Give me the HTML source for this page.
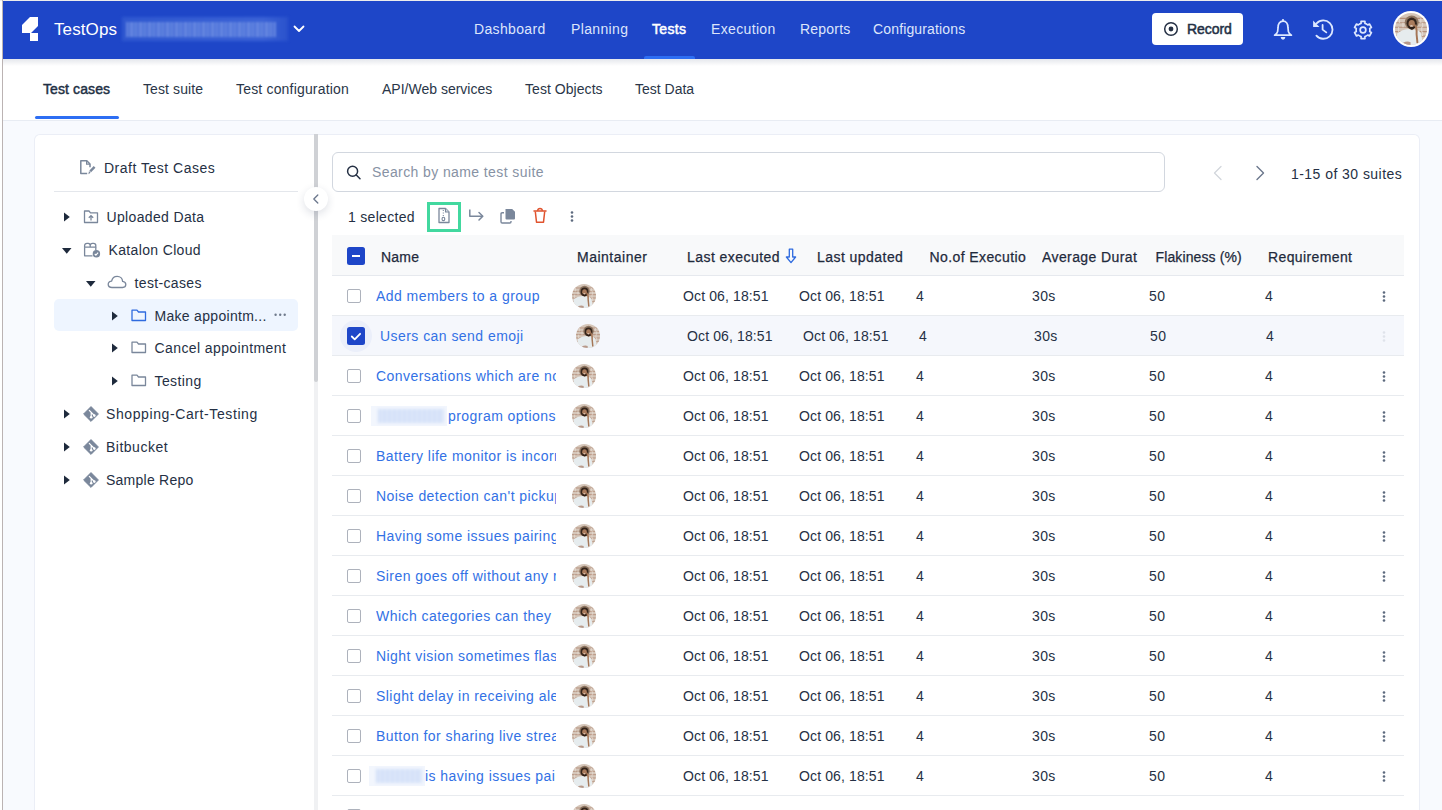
<!DOCTYPE html>
<html><head><meta charset="utf-8">
<style>
*{box-sizing:border-box;margin:0;padding:0}
html,body{width:1442px;height:810px;overflow:hidden;background:#fff;font-family:"Liberation Sans",sans-serif;color:#253044}
.a{position:absolute;white-space:nowrap}
.a svg{display:block}
.t{font-size:14px;line-height:20px;letter-spacing:0.35px}
.nav{color:#dde5fb}
.hd{color:#1f2a3c;-webkit-text-stroke:0.25px #1f2a3c;letter-spacing:0.4px}
.lk{color:#3271e5;letter-spacing:0.45px}
.cb{position:absolute;width:14px;height:14px;border:1.5px solid #adb2bc;border-radius:2px;background:#fff}
.km{position:absolute;width:3px;height:3px;border-radius:50%;background:#5d6a7e}
</style></head><body>
<div class="a" style="left:0;top:0;width:1442px;height:1px;background:#ececec"></div>
<div class="a" style="left:3px;top:1px;width:1439px;height:58px;background:#1e46c8"></div>
<div class="a" style="left:3px;top:59px;width:1439px;height:7px;background:linear-gradient(#e5e7ec,#fff)"></div>
<div class="a" style="left:3px;top:120px;width:1439px;height:690px;background:#f8fafe;border-top:1px solid #e8ecf3"></div>
<div class="a" style="left:35px;top:116px;width:84px;height:3px;background:#2d6ef3;border-radius:2px"></div>
<div class="a" style="left:35px;top:135px;width:1384px;height:720px;background:#fff;border-radius:5px;box-shadow:0 0 0 1px #ebeef6"></div>
<div class="a" style="left:2px;top:0;width:1px;height:810px;background:#bbb3b3"></div>

<svg class="a" style="left:20px;top:15px" width="20" height="28" viewBox="20 15 20 28">
<path d="M22 25 L30 17 L38 17 L38 26 L31 33 L22 33 Z M30 33 L38 33 L38 41 L30 41 Z" fill="#fff"/></svg>
<div class="a " style="left:54px;top:20px;font-size:17px;color:#fff;letter-spacing:0.1px">TestOps</div>
<div class="a" style="left:122px;top:17px;width:166px;height:24px;background:linear-gradient(90deg,#2f58d0,#3b63d6 85%,#2a52cc);filter:blur(1.5px)"></div>
<div class="a" style="left:126px;top:22px;width:150px;height:15px;background:repeating-linear-gradient(90deg,#6687e0 0 2px,#4f74da 2px 4px,#6a8ae2 4px 7px,#557adc 7px 9px);filter:blur(1.3px);opacity:.9"></div>
<svg class="a" style="left:292px;top:23px" width="14" height="12" viewBox="0 0 14 12"><path d="M2.5 3.5 L7 8 L11.5 3.5" stroke="#fff" stroke-width="1.8" fill="none" stroke-linecap="round" stroke-linejoin="round"/></svg>
<div class="a t nav" style="left:474px;top:19px;letter-spacing:0.35px">Dashboard</div>
<div class="a t nav" style="left:571px;top:19px;letter-spacing:0.35px">Planning</div>
<div class="a t nav" style="left:711px;top:19px;letter-spacing:0.35px">Execution</div>
<div class="a t nav" style="left:800px;top:19px;letter-spacing:0.2px">Reports</div>
<div class="a t nav" style="left:873px;top:19px;letter-spacing:0.15px">Configurations</div>
<div class="a t" style="left:652px;top:19px;color:#fff;-webkit-text-stroke:0.5px #fff;letter-spacing:0.3px">Tests</div>
<div class="a" style="left:644px;top:56px;width:51px;height:3px;background:#2d6ef3;border-radius:2px 2px 0 0"></div>
<div class="a" style="left:1152px;top:13px;width:91px;height:32px;background:#fff;border-radius:4px"></div>
<svg class="a" style="left:1163px;top:21px" width="16" height="16" viewBox="0 0 16 16"><circle cx="8" cy="8" r="6.3" stroke="#253044" stroke-width="1.5" fill="none"/><circle cx="8" cy="8" r="2.4" fill="#253044"/></svg>
<div class="a t" style="left:1187px;top:19px;-webkit-text-stroke:0.5px #243045;letter-spacing:-0.05px;color:#243045">Record</div>
<svg class="a" style="left:1271px;top:17px" width="24" height="24" viewBox="0 0 24 24"><path d="M12 4.2 C8.6 4.2 7.1 7.2 7.1 10.2 L6.6 14.6 Q6.2 16.6 3.6 18.2 L20.4 18.2 Q17.8 16.6 17.4 14.6 L16.9 10.2 C16.9 7.2 15.4 4.2 12 4.2Z" stroke="#dde8ff" stroke-width="1.7" fill="none" stroke-linejoin="round"/><circle cx="12" cy="3.1" r="1.1" fill="#dde8ff"/><path d="M9.6 20.1 L14.4 20.1 Q14.1 22.7 12 22.7 Q9.9 22.7 9.6 20.1Z" fill="#dde8ff"/></svg>
<svg class="a" style="left:1311px;top:18px" width="24" height="24" viewBox="0 0 24 24"><path d="M5.6 5.3 A9.2 9.2 0 1 1 5.4 17.6" stroke="#dde8ff" stroke-width="1.8" fill="none" stroke-linecap="round"/><path d="M2.1 2.6 L2.1 9 L8.5 9Z" fill="#dde8ff"/><path d="M11.6 7 L11.6 11.6 L15.3 14.4" stroke="#dde8ff" stroke-width="1.8" fill="none" stroke-linecap="round" stroke-linejoin="round"/></svg>
<svg class="a" style="left:1351px;top:17.5px" width="24" height="24" viewBox="0 0 24 24"><path d="M10.05 5.38 L10.05 3.42 L13.95 3.42 L13.95 5.38 A6.9 6.9 0 0 1 16.76 7.00 L18.46 6.02 L20.41 9.40 L18.71 10.38 A6.9 6.9 0 0 1 18.71 13.62 L20.41 14.60 L18.46 17.98 L16.76 17.00 A6.9 6.9 0 0 1 13.95 18.62 L13.95 20.58 L10.05 20.58 L10.05 18.62 A6.9 6.9 0 0 1 7.24 17.00 L5.54 17.98 L3.59 14.60 L5.29 13.62 A6.9 6.9 0 0 1 5.29 10.38 L3.59 9.40 L5.54 6.02 L7.24 7.00 A6.9 6.9 0 0 1 10.05 5.38 Z" stroke="#dde8ff" stroke-width="1.7" fill="none" stroke-linejoin="round"/><circle cx="12" cy="12" r="2.85" stroke="#dde8ff" stroke-width="1.7" fill="none"/></svg>
<div class="a" style="left:1393px;top:11px;width:36px;height:36px;border-radius:50%;background:#fff"></div>
<div class="a" style="left:1395px;top:13px;width:32px;height:32px"><svg width="32" height="32" viewBox="0 0 36 36"><defs><clipPath id="c1"><circle cx="18" cy="18" r="18"/></clipPath></defs>
<g clip-path="url(#c1)"><rect width="36" height="36" fill="#d5c6b9"/>
<path d="M0 6h36M0 11h36M0 16h36M0 21h36M0 26h36" stroke="#b48f7a" stroke-width="1.3"/>
<path d="M5 6v5M13 6v5M29 6v5M9 11v5M31 11v5M4 16v5M30 16v5M7 21v5M31 21v5" stroke="#e3d8cf" stroke-width="1.4"/>
<ellipse cx="18.8" cy="10.5" rx="7.8" ry="7.8" fill="#8c7460"/>
<ellipse cx="18.8" cy="11.5" rx="5.8" ry="6.4" fill="#33241b"/>
<ellipse cx="18.8" cy="12.3" rx="3.6" ry="4.4" fill="#a97b5c"/>
<path d="M15.2 13.2 Q15.6 18.8 18.8 18.8 Q22 18.8 22.4 13.2 Q20.8 16.2 18.8 15.6 Q16.8 16.2 15.2 13.2Z" fill="#2a1d16"/>
<ellipse cx="18.5" cy="14.5" rx="1.6" ry="0.7" fill="#efe6de"/>
<path d="M1 37 L2.5 23 Q8 18.5 15.5 18 L19 19.5 L22 18.8 Q27.5 18.8 29.5 23.5 L31.5 37Z" fill="#e6ecee"/>
<path d="M22.5 13.8 Q24.8 17 24.3 24 L25.2 33" stroke="#a57656" stroke-width="2.2" fill="none" stroke-linecap="round"/>
<path d="M9 33.5 Q14 31 17.5 33 L17.5 37 L9 37Z" fill="#b8998a"/>
</g></svg></div>
<div class="a t" style="left:43px;top:79px;-webkit-text-stroke:0.45px #223044;letter-spacing:0.1px;color:#223044">Test cases</div>
<div class="a t" style="left:143px;top:79px;color:#2a3648;letter-spacing:0.1px">Test suite</div>
<div class="a t" style="left:236px;top:79px;color:#2a3648;letter-spacing:0.18px">Test configuration</div>
<div class="a t" style="left:382px;top:79px;color:#2a3648;letter-spacing:0.0px">API/Web services</div>
<div class="a t" style="left:525px;top:79px;color:#2a3648;letter-spacing:0.05px">Test Objects</div>
<div class="a t" style="left:635px;top:79px;color:#2a3648;letter-spacing:0.0px">Test Data</div>
<svg class="a" style="left:79px;top:159px" width="18" height="16" viewBox="0 0 18 16"><path d="M8.2 14.6 L1.8 14.6 L1.8 1.8 L7.8 1.8 L11 5 L11 8.2" stroke="#7a879b" stroke-width="1.5" fill="none" stroke-linejoin="round"/><path d="M7.6 1.8 L7.6 5.2 L11 5.2" stroke="#7a879b" stroke-width="1.2" fill="none"/><path d="M11.2 12.3 L15.6 7.9" stroke="#7a879b" stroke-width="2.4" stroke-linecap="butt"/><path d="M9.4 15.2 L10 12.1 L11.6 13.7Z" fill="#7a879b"/></svg>
<div class="a t" style="left:104px;top:158px;letter-spacing:0.5px">Draft Test Cases</div>
<div class="a" style="left:54px;top:191px;width:244px;height:1px;background:#e4e7ec"></div>
<div class="a" style="left:54px;top:299px;width:244px;height:32px;background:#eef5ff;border-radius:5px"></div>
<svg class="a" style="left:64px;top:212px" width="6" height="10" viewBox="0 0 6 10"><path d="M0 0.5 L5.8 5 L0 9.5Z" fill="#1e2a3c"/></svg>
<svg class="a" style="left:83px;top:209px" width="16" height="15" viewBox="0 0 16 15"><path d="M1.5 2 L6 2 L7.5 3.8 L14.5 3.8 L14.5 13.5 L1.5 13.5Z" stroke="#7a879b" stroke-width="1.3" fill="none" stroke-linejoin="round"/><path d="M8 11.5 L8 7 M5.8 8.8 L8 6.6 L10.2 8.8" stroke="#7a879b" stroke-width="1.3" fill="none"/></svg>
<div class="a t" style="left:106.5px;top:207px;">Uploaded Data</div>
<svg class="a" style="left:62px;top:248px" width="10" height="6" viewBox="0 0 10 6"><path d="M0 0 L9.5 0 L4.75 5.8Z" fill="#1e2a3c"/></svg>
<svg class="a" style="left:83px;top:242px" width="18" height="16" viewBox="0 0 18 16"><path d="M9.5 13.8 L1.6 13.8 L1.6 5.2 M12.8 5.2 L12.8 8.3" stroke="#7a879b" stroke-width="1.3" fill="none" stroke-linejoin="round"/><path d="M1.6 5.2 L1.6 3.6 Q1.6 1.4 4 1.4 L5.2 1.4 Q7.2 1.4 7.2 3.6 L7.2 5.2 M7.2 3.6 Q7.2 1.4 9.4 1.4 L10.6 1.4 Q12.8 1.4 12.8 3.6 L12.8 5.2 M1 5.2 L13.4 5.2" stroke="#7a879b" stroke-width="1.3" fill="none" stroke-linejoin="round"/><circle cx="13.4" cy="11.8" r="3.7" fill="#7a879b"/><path d="M11.7 11.9 L12.9 13.1 L15.1 10.7" stroke="#fff" stroke-width="1.1" fill="none"/></svg>
<div class="a t" style="left:108.5px;top:240px;">Katalon Cloud</div>
<svg class="a" style="left:86px;top:281px" width="10" height="6" viewBox="0 0 10 6"><path d="M0 0 L9.5 0 L4.75 5.8Z" fill="#1e2a3c"/></svg>
<svg class="a" style="left:107px;top:275px" width="20" height="14" viewBox="0 0 20 14"><path d="M5 12.5 C2.5 12.5 1.2 11 1.2 9.2 C1.2 7.3 2.8 6 4.6 6.1 C5.2 3.2 7.6 1.3 10.2 1.3 C13.2 1.3 15.4 3.6 15.6 6.4 C17.4 6.6 18.8 7.8 18.8 9.6 C18.8 11.3 17.5 12.5 15.6 12.5Z" stroke="#7a879b" stroke-width="1.3" fill="none" stroke-linejoin="round"/></svg>
<div class="a t" style="left:134.5px;top:273px;">test-cases</div>
<svg class="a" style="left:112px;top:310.5px" width="6" height="10" viewBox="0 0 6 10"><path d="M0 0.5 L5.8 5 L0 9.5Z" fill="#1e2a3c"/></svg>
<svg class="a" style="left:131px;top:308.5px" width="16" height="13" viewBox="0 0 16 13"><path d="M1 1.2 L6 1.2 L7.5 3 L14.5 3 L14.5 11.5 L1 11.5Z" stroke="#2f6bdf" stroke-width="1.3" fill="none" stroke-linejoin="round"/></svg>
<div class="a t" style="left:154.5px;top:305.5px;letter-spacing:0.3px">Make appointm...</div>
<svg class="a" style="left:270px;top:309px" width="20" height="12" viewBox="0 0 20 12"><circle cx="5.6" cy="5.7" r="1.2" fill="#6f7a8c"/><circle cx="10.2" cy="5.7" r="1.2" fill="#6f7a8c"/><circle cx="14.7" cy="5.7" r="1.2" fill="#6f7a8c"/></svg>
<svg class="a" style="left:112px;top:343px" width="6" height="10" viewBox="0 0 6 10"><path d="M0 0.5 L5.8 5 L0 9.5Z" fill="#1e2a3c"/></svg>
<svg class="a" style="left:131px;top:341px" width="16" height="13" viewBox="0 0 16 13"><path d="M1 1.2 L6 1.2 L7.5 3 L14.5 3 L14.5 11.5 L1 11.5Z" stroke="#7a879b" stroke-width="1.3" fill="none" stroke-linejoin="round"/></svg>
<div class="a t" style="left:154.5px;top:338px;letter-spacing:0.4px">Cancel appointment</div>
<svg class="a" style="left:112px;top:376px" width="6" height="10" viewBox="0 0 6 10"><path d="M0 0.5 L5.8 5 L0 9.5Z" fill="#1e2a3c"/></svg>
<svg class="a" style="left:131px;top:374px" width="16" height="13" viewBox="0 0 16 13"><path d="M1 1.2 L6 1.2 L7.5 3 L14.5 3 L14.5 11.5 L1 11.5Z" stroke="#7a879b" stroke-width="1.3" fill="none" stroke-linejoin="round"/></svg>
<div class="a t" style="left:154.5px;top:371px;letter-spacing:0.4px">Testing</div>
<svg class="a" style="left:64px;top:409px" width="6" height="10" viewBox="0 0 6 10"><path d="M0 0.5 L5.8 5 L0 9.5Z" fill="#1e2a3c"/></svg>
<svg class="a" style="left:83px;top:406px" width="16" height="16" viewBox="0 0 16 16"><path d="M8 0.6 L15.4 8 L8 15.4 L0.6 8Z" fill="#7a879b" stroke="#7a879b" stroke-width="1" stroke-linejoin="round"/><path d="M6 4.2 L11.3 9.5 M8.2 6.4 L8.2 11" stroke="#fff" stroke-width="1.2"/><circle cx="8.2" cy="11.3" r="1.3" fill="#fff"/><circle cx="11.3" cy="9.6" r="1.3" fill="#fff"/></svg>
<div class="a t" style="left:106px;top:404px;letter-spacing:0.6px">Shopping-Cart-Testing</div>
<svg class="a" style="left:64px;top:442px" width="6" height="10" viewBox="0 0 6 10"><path d="M0 0.5 L5.8 5 L0 9.5Z" fill="#1e2a3c"/></svg>
<svg class="a" style="left:83px;top:439px" width="16" height="16" viewBox="0 0 16 16"><path d="M8 0.6 L15.4 8 L8 15.4 L0.6 8Z" fill="#7a879b" stroke="#7a879b" stroke-width="1" stroke-linejoin="round"/><path d="M6 4.2 L11.3 9.5 M8.2 6.4 L8.2 11" stroke="#fff" stroke-width="1.2"/><circle cx="8.2" cy="11.3" r="1.3" fill="#fff"/><circle cx="11.3" cy="9.6" r="1.3" fill="#fff"/></svg>
<div class="a t" style="left:106px;top:437px;letter-spacing:0.5px">Bitbucket</div>
<svg class="a" style="left:64px;top:475px" width="6" height="10" viewBox="0 0 6 10"><path d="M0 0.5 L5.8 5 L0 9.5Z" fill="#1e2a3c"/></svg>
<svg class="a" style="left:83px;top:472px" width="16" height="16" viewBox="0 0 16 16"><path d="M8 0.6 L15.4 8 L8 15.4 L0.6 8Z" fill="#7a879b" stroke="#7a879b" stroke-width="1" stroke-linejoin="round"/><path d="M6 4.2 L11.3 9.5 M8.2 6.4 L8.2 11" stroke="#fff" stroke-width="1.2"/><circle cx="8.2" cy="11.3" r="1.3" fill="#fff"/><circle cx="11.3" cy="9.6" r="1.3" fill="#fff"/></svg>
<div class="a t" style="left:106px;top:470px;letter-spacing:0.25px">Sample Repo</div>
<div class="a" style="left:314px;top:134px;width:4px;height:676px;background:#f0f1f3"></div>
<div class="a" style="left:314px;top:134px;width:4px;height:248px;background:#cfd1d5;border-radius:0 0 2px 2px"></div>
<div class="a" style="left:304px;top:187px;width:24px;height:24px;border-radius:50%;background:#fff;box-shadow:0 3px 9px rgba(30,40,80,.14)"></div>
<svg class="a" style="left:310px;top:193px" width="12" height="12" viewBox="0 0 12 12"><path d="M7.8 2 L3.8 6 L7.8 10" stroke="#6b778c" stroke-width="1.3" fill="none" stroke-linecap="round" stroke-linejoin="round"/></svg>
<div class="a" style="left:332px;top:152px;width:833px;height:40px;border:1px solid #d2d7df;border-radius:6px;background:#fff"></div>
<svg class="a" style="left:345px;top:164px" width="17" height="17" viewBox="0 0 17 17"><circle cx="7.6" cy="7.3" r="5" stroke="#253044" stroke-width="1.5" fill="none"/><path d="M11.3 11 L15 14.7" stroke="#253044" stroke-width="1.5" stroke-linecap="round"/></svg>
<div class="a t" style="left:372px;top:162px;color:#8792a4;letter-spacing:0.4px">Search by name test suite</div>
<svg class="a" style="left:1211px;top:165px" width="14" height="16" viewBox="0 0 14 16"><path d="M10 1.5 L3.5 8 L10 14.5" stroke="#d2d6dc" stroke-width="1.3" fill="none" stroke-linecap="round" stroke-linejoin="round"/></svg>
<svg class="a" style="left:1253px;top:165px" width="14" height="16" viewBox="0 0 14 16"><path d="M4 1.5 L10.5 8 L4 14.5" stroke="#6b778c" stroke-width="1.4" fill="none" stroke-linecap="round" stroke-linejoin="round"/></svg>
<div class="a t" style="left:1291px;top:163.5px;letter-spacing:0.45px">1-15 of 30 suites</div>
<div class="a t" style="left:348px;top:206.5px;letter-spacing:0.3px">1 selected</div>
<div class="a" style="left:427px;top:202px;width:34px;height:30px;border:3px solid #42d89f"></div>
<svg class="a" style="left:437px;top:207px" width="14" height="17" viewBox="0 0 14 17"><path d="M2 1.5 L8.5 1.5 L12 5 L12 15.5 L2 15.5Z" stroke="#7a879b" stroke-width="1.3" fill="none" stroke-linejoin="round"/><path d="M8.5 1.5 L8.5 5 L12 5" stroke="#7a879b" stroke-width="1.1" fill="#d6dbe3"/><path d="M6.3 3 L6.3 4 M6.3 5.5 L6.3 6.5 M6.3 8 L6.3 9" stroke="#7a879b" stroke-width="1.1"/><rect x="5.1" y="10.2" width="2.6" height="3.4" rx="1.2" stroke="#7a879b" stroke-width="1.1" fill="none"/></svg>
<svg class="a" style="left:468px;top:208px" width="17" height="14" viewBox="0 0 17 14"><path d="M1.8 1.5 L1.8 8.2 L14.5 8.2" stroke="#7a879b" stroke-width="1.5" fill="none" stroke-linejoin="round"/><path d="M11 4.5 L14.8 8.2 L11 12" stroke="#7a879b" stroke-width="1.5" fill="none" stroke-linecap="round" stroke-linejoin="round"/></svg>
<svg class="a" style="left:500px;top:208px" width="16" height="16" viewBox="0 0 16 16"><path d="M5.5 1 L12.2 1 L15 3.8 L15 10.5 Q15 11.6 13.9 11.6 L6.6 11.6 Q5.5 11.6 5.5 10.5Z" fill="#7a879b"/><path d="M4 4.8 L2.2 4.8 Q1 4.8 1 6 L1 13.8 Q1 15 2.2 15 L9.8 15 Q11 15 11 13.8 L11 13" stroke="#7a879b" stroke-width="1.4" fill="none"/></svg>
<svg class="a" style="left:532px;top:207px" width="16" height="17" viewBox="0 0 16 17"><path d="M2 4 L14 4" stroke="#e0532e" stroke-width="1.5" stroke-linecap="round"/><path d="M5.5 3.8 Q5.8 1.5 8 1.5 Q10.2 1.5 10.5 3.8" stroke="#e0532e" stroke-width="1.4" fill="none"/><path d="M3.3 4.5 L4.5 15.2 L11.5 15.2 L12.7 4.5" stroke="#e0532e" stroke-width="1.5" fill="none" stroke-linejoin="round"/></svg>
<svg class="a" style="left:568px;top:207px" width="8" height="18" viewBox="0 0 8 18"><circle cx="4" cy="5.5" r="1.3" fill="#5d6a7e"/><circle cx="4" cy="9.5" r="1.3" fill="#5d6a7e"/><circle cx="4" cy="13.5" r="1.3" fill="#5d6a7e"/></svg>
<div class="a" style="left:332px;top:235px;width:1072px;height:41px;background:#f8f9fa;border-bottom:1px solid #e6e9ee"></div>
<div class="a" style="left:347px;top:247px;width:18px;height:18px;background:#1e46c8;border-radius:2.5px"></div>
<div class="a" style="left:352px;top:255px;width:8px;height:2px;background:#fff"></div>
<div class="a t hd" style="left:381px;top:246.5px;letter-spacing:0.2px;">Name</div>
<div class="a t hd" style="left:577px;top:246.5px;letter-spacing:0.5px;">Maintainer</div>
<div class="a t hd" style="left:687px;top:246.5px;letter-spacing:0.45px;">Last executed</div>
<div class="a t hd" style="left:817px;top:246.5px;letter-spacing:0.45px;">Last updated</div>
<div class="a t hd" style="left:929.5px;top:246.5px;overflow:hidden;width:97px;">No.of Executio</div>
<div class="a t hd" style="left:1042px;top:246.5px;overflow:hidden;width:96px;">Average Durat</div>
<div class="a t hd" style="left:1155.5px;top:246.5px;letter-spacing:0.12px;">Flakiness (%)</div>
<div class="a t hd" style="left:1268px;top:246.5px;letter-spacing:0.38px;">Requirement</div>
<svg class="a" style="left:785px;top:248px" width="12" height="16" viewBox="0 0 12 16"><path d="M4.3 1.2 L7.7 1.2 L7.7 9 L10.6 9 L6 14.6 L1.4 9 L4.3 9Z" stroke="#2f6bdf" stroke-width="1.3" fill="none" stroke-linejoin="round"/></svg>
<div class="a" style="left:332px;top:315px;width:1072px;height:1px;background:#e8ebef"></div>
<div class="cb" style="left:347px;top:289px"></div>
<div class="a t lk" style="left:376px;top:286px;overflow:hidden;width:180px">Add members to a group</div>
<div class="a" style="left:572px;top:284px;width:24px;height:24px"><svg width="24" height="24" viewBox="0 0 36 36"><defs><clipPath id="c2"><circle cx="18" cy="18" r="18"/></clipPath></defs>
<g clip-path="url(#c2)"><rect width="36" height="36" fill="#d5c6b9"/>
<path d="M0 6h36M0 11h36M0 16h36M0 21h36M0 26h36" stroke="#b48f7a" stroke-width="1.3"/>
<path d="M5 6v5M13 6v5M29 6v5M9 11v5M31 11v5M4 16v5M30 16v5M7 21v5M31 21v5" stroke="#e3d8cf" stroke-width="1.4"/>
<ellipse cx="18.8" cy="10.5" rx="7.8" ry="7.8" fill="#8c7460"/>
<ellipse cx="18.8" cy="11.5" rx="5.8" ry="6.4" fill="#33241b"/>
<ellipse cx="18.8" cy="12.3" rx="3.6" ry="4.4" fill="#a97b5c"/>
<path d="M15.2 13.2 Q15.6 18.8 18.8 18.8 Q22 18.8 22.4 13.2 Q20.8 16.2 18.8 15.6 Q16.8 16.2 15.2 13.2Z" fill="#2a1d16"/>
<ellipse cx="18.5" cy="14.5" rx="1.6" ry="0.7" fill="#efe6de"/>
<path d="M1 37 L2.5 23 Q8 18.5 15.5 18 L19 19.5 L22 18.8 Q27.5 18.8 29.5 23.5 L31.5 37Z" fill="#e6ecee"/>
<path d="M22.5 13.8 Q24.8 17 24.3 24 L25.2 33" stroke="#a57656" stroke-width="2.2" fill="none" stroke-linecap="round"/>
<path d="M9 33.5 Q14 31 17.5 33 L17.5 37 L9 37Z" fill="#b8998a"/>
</g></svg></div>
<div class="a t" style="left:683px;top:286px;letter-spacing:0.12px">Oct 06, 18:51</div>
<div class="a t" style="left:799px;top:286px;letter-spacing:0.12px">Oct 06, 18:51</div>
<div class="a t" style="left:916px;top:286px;">4</div>
<div class="a t" style="left:1032px;top:286px;">30s</div>
<div class="a t" style="left:1149px;top:286px;">50</div>
<div class="a t" style="left:1265px;top:286px;">4</div>
<svg class="a" style="left:1380px;top:287px" width="8" height="18" viewBox="0 0 8 18"><circle cx="4" cy="5.5" r="1.3" fill="#5d6a7e"/><circle cx="4" cy="9.5" r="1.3" fill="#5d6a7e"/><circle cx="4" cy="13.5" r="1.3" fill="#5d6a7e"/></svg>
<div class="a" style="left:332px;top:316px;width:1072px;height:39px;background:#f5f7fc"></div>
<div class="a" style="left:332px;top:355px;width:1072px;height:1px;background:#e8ebef"></div>
<div class="a" style="left:340px;top:320px;width:32px;height:32px;border-radius:50%;background:#ebeffa"></div>
<div class="a" style="left:347px;top:327px;width:18px;height:18px;background:#1e46c8;border-radius:2.5px"></div>
<svg class="a" style="left:347px;top:327px" width="18" height="18" viewBox="0 0 18 18"><path d="M4.8 9.5 L7.7 12.3 L13.1 6.8" stroke="#fff" stroke-width="1.8" fill="none" stroke-linecap="round" stroke-linejoin="round"/></svg>
<div class="a t lk" style="left:380px;top:326px;overflow:hidden;width:176px">Users can send emoji</div>
<div class="a" style="left:576px;top:324px;width:24px;height:24px"><svg width="24" height="24" viewBox="0 0 36 36"><defs><clipPath id="c3"><circle cx="18" cy="18" r="18"/></clipPath></defs>
<g clip-path="url(#c3)"><rect width="36" height="36" fill="#d5c6b9"/>
<path d="M0 6h36M0 11h36M0 16h36M0 21h36M0 26h36" stroke="#b48f7a" stroke-width="1.3"/>
<path d="M5 6v5M13 6v5M29 6v5M9 11v5M31 11v5M4 16v5M30 16v5M7 21v5M31 21v5" stroke="#e3d8cf" stroke-width="1.4"/>
<ellipse cx="18.8" cy="10.5" rx="7.8" ry="7.8" fill="#8c7460"/>
<ellipse cx="18.8" cy="11.5" rx="5.8" ry="6.4" fill="#33241b"/>
<ellipse cx="18.8" cy="12.3" rx="3.6" ry="4.4" fill="#a97b5c"/>
<path d="M15.2 13.2 Q15.6 18.8 18.8 18.8 Q22 18.8 22.4 13.2 Q20.8 16.2 18.8 15.6 Q16.8 16.2 15.2 13.2Z" fill="#2a1d16"/>
<ellipse cx="18.5" cy="14.5" rx="1.6" ry="0.7" fill="#efe6de"/>
<path d="M1 37 L2.5 23 Q8 18.5 15.5 18 L19 19.5 L22 18.8 Q27.5 18.8 29.5 23.5 L31.5 37Z" fill="#e6ecee"/>
<path d="M22.5 13.8 Q24.8 17 24.3 24 L25.2 33" stroke="#a57656" stroke-width="2.2" fill="none" stroke-linecap="round"/>
<path d="M9 33.5 Q14 31 17.5 33 L17.5 37 L9 37Z" fill="#b8998a"/>
</g></svg></div>
<div class="a t" style="left:687px;top:326px;letter-spacing:0.12px">Oct 06, 18:51</div>
<div class="a t" style="left:803px;top:326px;letter-spacing:0.12px">Oct 06, 18:51</div>
<div class="a t" style="left:919px;top:326px;">4</div>
<div class="a t" style="left:1034px;top:326px;">30s</div>
<div class="a t" style="left:1150px;top:326px;">50</div>
<div class="a t" style="left:1266px;top:326px;">4</div>
<svg class="a" style="left:1380px;top:327px" width="8" height="18" viewBox="0 0 8 18"><circle cx="4" cy="5.5" r="1.3" fill="#dfe3ea"/><circle cx="4" cy="9.5" r="1.3" fill="#dfe3ea"/><circle cx="4" cy="13.5" r="1.3" fill="#dfe3ea"/></svg>
<div class="a" style="left:332px;top:395px;width:1072px;height:1px;background:#e8ebef"></div>
<div class="cb" style="left:347px;top:369px"></div>
<div class="a t lk" style="left:376px;top:366px;overflow:hidden;width:180px">Conversations which are not</div>
<div class="a" style="left:572px;top:364px;width:24px;height:24px"><svg width="24" height="24" viewBox="0 0 36 36"><defs><clipPath id="c4"><circle cx="18" cy="18" r="18"/></clipPath></defs>
<g clip-path="url(#c4)"><rect width="36" height="36" fill="#d5c6b9"/>
<path d="M0 6h36M0 11h36M0 16h36M0 21h36M0 26h36" stroke="#b48f7a" stroke-width="1.3"/>
<path d="M5 6v5M13 6v5M29 6v5M9 11v5M31 11v5M4 16v5M30 16v5M7 21v5M31 21v5" stroke="#e3d8cf" stroke-width="1.4"/>
<ellipse cx="18.8" cy="10.5" rx="7.8" ry="7.8" fill="#8c7460"/>
<ellipse cx="18.8" cy="11.5" rx="5.8" ry="6.4" fill="#33241b"/>
<ellipse cx="18.8" cy="12.3" rx="3.6" ry="4.4" fill="#a97b5c"/>
<path d="M15.2 13.2 Q15.6 18.8 18.8 18.8 Q22 18.8 22.4 13.2 Q20.8 16.2 18.8 15.6 Q16.8 16.2 15.2 13.2Z" fill="#2a1d16"/>
<ellipse cx="18.5" cy="14.5" rx="1.6" ry="0.7" fill="#efe6de"/>
<path d="M1 37 L2.5 23 Q8 18.5 15.5 18 L19 19.5 L22 18.8 Q27.5 18.8 29.5 23.5 L31.5 37Z" fill="#e6ecee"/>
<path d="M22.5 13.8 Q24.8 17 24.3 24 L25.2 33" stroke="#a57656" stroke-width="2.2" fill="none" stroke-linecap="round"/>
<path d="M9 33.5 Q14 31 17.5 33 L17.5 37 L9 37Z" fill="#b8998a"/>
</g></svg></div>
<div class="a t" style="left:683px;top:366px;letter-spacing:0.12px">Oct 06, 18:51</div>
<div class="a t" style="left:799px;top:366px;letter-spacing:0.12px">Oct 06, 18:51</div>
<div class="a t" style="left:916px;top:366px;">4</div>
<div class="a t" style="left:1032px;top:366px;">30s</div>
<div class="a t" style="left:1149px;top:366px;">50</div>
<div class="a t" style="left:1265px;top:366px;">4</div>
<svg class="a" style="left:1380px;top:367px" width="8" height="18" viewBox="0 0 8 18"><circle cx="4" cy="5.5" r="1.3" fill="#5d6a7e"/><circle cx="4" cy="9.5" r="1.3" fill="#5d6a7e"/><circle cx="4" cy="13.5" r="1.3" fill="#5d6a7e"/></svg>
<div class="a" style="left:332px;top:435px;width:1072px;height:1px;background:#e8ebef"></div>
<div class="cb" style="left:347px;top:409px"></div>
<div class="a" style="left:371px;top:406px;width:76px;height:20px;background:#f2f6fd"></div>
<div class="a" style="left:378px;top:409px;width:66px;height:14px;background:repeating-linear-gradient(90deg,#d3e0f8 0 3px,#dfe8fa 3px 5px);filter:blur(1.8px)"></div>
<div class="a t lk" style="left:448px;top:406px;overflow:hidden;width:108px">program options</div>
<div class="a" style="left:572px;top:404px;width:24px;height:24px"><svg width="24" height="24" viewBox="0 0 36 36"><defs><clipPath id="c5"><circle cx="18" cy="18" r="18"/></clipPath></defs>
<g clip-path="url(#c5)"><rect width="36" height="36" fill="#d5c6b9"/>
<path d="M0 6h36M0 11h36M0 16h36M0 21h36M0 26h36" stroke="#b48f7a" stroke-width="1.3"/>
<path d="M5 6v5M13 6v5M29 6v5M9 11v5M31 11v5M4 16v5M30 16v5M7 21v5M31 21v5" stroke="#e3d8cf" stroke-width="1.4"/>
<ellipse cx="18.8" cy="10.5" rx="7.8" ry="7.8" fill="#8c7460"/>
<ellipse cx="18.8" cy="11.5" rx="5.8" ry="6.4" fill="#33241b"/>
<ellipse cx="18.8" cy="12.3" rx="3.6" ry="4.4" fill="#a97b5c"/>
<path d="M15.2 13.2 Q15.6 18.8 18.8 18.8 Q22 18.8 22.4 13.2 Q20.8 16.2 18.8 15.6 Q16.8 16.2 15.2 13.2Z" fill="#2a1d16"/>
<ellipse cx="18.5" cy="14.5" rx="1.6" ry="0.7" fill="#efe6de"/>
<path d="M1 37 L2.5 23 Q8 18.5 15.5 18 L19 19.5 L22 18.8 Q27.5 18.8 29.5 23.5 L31.5 37Z" fill="#e6ecee"/>
<path d="M22.5 13.8 Q24.8 17 24.3 24 L25.2 33" stroke="#a57656" stroke-width="2.2" fill="none" stroke-linecap="round"/>
<path d="M9 33.5 Q14 31 17.5 33 L17.5 37 L9 37Z" fill="#b8998a"/>
</g></svg></div>
<div class="a t" style="left:683px;top:406px;letter-spacing:0.12px">Oct 06, 18:51</div>
<div class="a t" style="left:799px;top:406px;letter-spacing:0.12px">Oct 06, 18:51</div>
<div class="a t" style="left:916px;top:406px;">4</div>
<div class="a t" style="left:1032px;top:406px;">30s</div>
<div class="a t" style="left:1149px;top:406px;">50</div>
<div class="a t" style="left:1265px;top:406px;">4</div>
<svg class="a" style="left:1380px;top:407px" width="8" height="18" viewBox="0 0 8 18"><circle cx="4" cy="5.5" r="1.3" fill="#5d6a7e"/><circle cx="4" cy="9.5" r="1.3" fill="#5d6a7e"/><circle cx="4" cy="13.5" r="1.3" fill="#5d6a7e"/></svg>
<div class="a" style="left:332px;top:475px;width:1072px;height:1px;background:#e8ebef"></div>
<div class="cb" style="left:347px;top:449px"></div>
<div class="a t lk" style="left:376px;top:446px;overflow:hidden;width:180px">Battery life monitor is incorrect</div>
<div class="a" style="left:572px;top:444px;width:24px;height:24px"><svg width="24" height="24" viewBox="0 0 36 36"><defs><clipPath id="c6"><circle cx="18" cy="18" r="18"/></clipPath></defs>
<g clip-path="url(#c6)"><rect width="36" height="36" fill="#d5c6b9"/>
<path d="M0 6h36M0 11h36M0 16h36M0 21h36M0 26h36" stroke="#b48f7a" stroke-width="1.3"/>
<path d="M5 6v5M13 6v5M29 6v5M9 11v5M31 11v5M4 16v5M30 16v5M7 21v5M31 21v5" stroke="#e3d8cf" stroke-width="1.4"/>
<ellipse cx="18.8" cy="10.5" rx="7.8" ry="7.8" fill="#8c7460"/>
<ellipse cx="18.8" cy="11.5" rx="5.8" ry="6.4" fill="#33241b"/>
<ellipse cx="18.8" cy="12.3" rx="3.6" ry="4.4" fill="#a97b5c"/>
<path d="M15.2 13.2 Q15.6 18.8 18.8 18.8 Q22 18.8 22.4 13.2 Q20.8 16.2 18.8 15.6 Q16.8 16.2 15.2 13.2Z" fill="#2a1d16"/>
<ellipse cx="18.5" cy="14.5" rx="1.6" ry="0.7" fill="#efe6de"/>
<path d="M1 37 L2.5 23 Q8 18.5 15.5 18 L19 19.5 L22 18.8 Q27.5 18.8 29.5 23.5 L31.5 37Z" fill="#e6ecee"/>
<path d="M22.5 13.8 Q24.8 17 24.3 24 L25.2 33" stroke="#a57656" stroke-width="2.2" fill="none" stroke-linecap="round"/>
<path d="M9 33.5 Q14 31 17.5 33 L17.5 37 L9 37Z" fill="#b8998a"/>
</g></svg></div>
<div class="a t" style="left:683px;top:446px;letter-spacing:0.12px">Oct 06, 18:51</div>
<div class="a t" style="left:799px;top:446px;letter-spacing:0.12px">Oct 06, 18:51</div>
<div class="a t" style="left:916px;top:446px;">4</div>
<div class="a t" style="left:1032px;top:446px;">30s</div>
<div class="a t" style="left:1149px;top:446px;">50</div>
<div class="a t" style="left:1265px;top:446px;">4</div>
<svg class="a" style="left:1380px;top:447px" width="8" height="18" viewBox="0 0 8 18"><circle cx="4" cy="5.5" r="1.3" fill="#5d6a7e"/><circle cx="4" cy="9.5" r="1.3" fill="#5d6a7e"/><circle cx="4" cy="13.5" r="1.3" fill="#5d6a7e"/></svg>
<div class="a" style="left:332px;top:515px;width:1072px;height:1px;background:#e8ebef"></div>
<div class="cb" style="left:347px;top:489px"></div>
<div class="a t lk" style="left:376px;top:486px;overflow:hidden;width:180px">Noise detection can't pickup</div>
<div class="a" style="left:572px;top:484px;width:24px;height:24px"><svg width="24" height="24" viewBox="0 0 36 36"><defs><clipPath id="c7"><circle cx="18" cy="18" r="18"/></clipPath></defs>
<g clip-path="url(#c7)"><rect width="36" height="36" fill="#d5c6b9"/>
<path d="M0 6h36M0 11h36M0 16h36M0 21h36M0 26h36" stroke="#b48f7a" stroke-width="1.3"/>
<path d="M5 6v5M13 6v5M29 6v5M9 11v5M31 11v5M4 16v5M30 16v5M7 21v5M31 21v5" stroke="#e3d8cf" stroke-width="1.4"/>
<ellipse cx="18.8" cy="10.5" rx="7.8" ry="7.8" fill="#8c7460"/>
<ellipse cx="18.8" cy="11.5" rx="5.8" ry="6.4" fill="#33241b"/>
<ellipse cx="18.8" cy="12.3" rx="3.6" ry="4.4" fill="#a97b5c"/>
<path d="M15.2 13.2 Q15.6 18.8 18.8 18.8 Q22 18.8 22.4 13.2 Q20.8 16.2 18.8 15.6 Q16.8 16.2 15.2 13.2Z" fill="#2a1d16"/>
<ellipse cx="18.5" cy="14.5" rx="1.6" ry="0.7" fill="#efe6de"/>
<path d="M1 37 L2.5 23 Q8 18.5 15.5 18 L19 19.5 L22 18.8 Q27.5 18.8 29.5 23.5 L31.5 37Z" fill="#e6ecee"/>
<path d="M22.5 13.8 Q24.8 17 24.3 24 L25.2 33" stroke="#a57656" stroke-width="2.2" fill="none" stroke-linecap="round"/>
<path d="M9 33.5 Q14 31 17.5 33 L17.5 37 L9 37Z" fill="#b8998a"/>
</g></svg></div>
<div class="a t" style="left:683px;top:486px;letter-spacing:0.12px">Oct 06, 18:51</div>
<div class="a t" style="left:799px;top:486px;letter-spacing:0.12px">Oct 06, 18:51</div>
<div class="a t" style="left:916px;top:486px;">4</div>
<div class="a t" style="left:1032px;top:486px;">30s</div>
<div class="a t" style="left:1149px;top:486px;">50</div>
<div class="a t" style="left:1265px;top:486px;">4</div>
<svg class="a" style="left:1380px;top:487px" width="8" height="18" viewBox="0 0 8 18"><circle cx="4" cy="5.5" r="1.3" fill="#5d6a7e"/><circle cx="4" cy="9.5" r="1.3" fill="#5d6a7e"/><circle cx="4" cy="13.5" r="1.3" fill="#5d6a7e"/></svg>
<div class="a" style="left:332px;top:555px;width:1072px;height:1px;background:#e8ebef"></div>
<div class="cb" style="left:347px;top:529px"></div>
<div class="a t lk" style="left:376px;top:526px;overflow:hidden;width:180px">Having some issues pairing</div>
<div class="a" style="left:572px;top:524px;width:24px;height:24px"><svg width="24" height="24" viewBox="0 0 36 36"><defs><clipPath id="c8"><circle cx="18" cy="18" r="18"/></clipPath></defs>
<g clip-path="url(#c8)"><rect width="36" height="36" fill="#d5c6b9"/>
<path d="M0 6h36M0 11h36M0 16h36M0 21h36M0 26h36" stroke="#b48f7a" stroke-width="1.3"/>
<path d="M5 6v5M13 6v5M29 6v5M9 11v5M31 11v5M4 16v5M30 16v5M7 21v5M31 21v5" stroke="#e3d8cf" stroke-width="1.4"/>
<ellipse cx="18.8" cy="10.5" rx="7.8" ry="7.8" fill="#8c7460"/>
<ellipse cx="18.8" cy="11.5" rx="5.8" ry="6.4" fill="#33241b"/>
<ellipse cx="18.8" cy="12.3" rx="3.6" ry="4.4" fill="#a97b5c"/>
<path d="M15.2 13.2 Q15.6 18.8 18.8 18.8 Q22 18.8 22.4 13.2 Q20.8 16.2 18.8 15.6 Q16.8 16.2 15.2 13.2Z" fill="#2a1d16"/>
<ellipse cx="18.5" cy="14.5" rx="1.6" ry="0.7" fill="#efe6de"/>
<path d="M1 37 L2.5 23 Q8 18.5 15.5 18 L19 19.5 L22 18.8 Q27.5 18.8 29.5 23.5 L31.5 37Z" fill="#e6ecee"/>
<path d="M22.5 13.8 Q24.8 17 24.3 24 L25.2 33" stroke="#a57656" stroke-width="2.2" fill="none" stroke-linecap="round"/>
<path d="M9 33.5 Q14 31 17.5 33 L17.5 37 L9 37Z" fill="#b8998a"/>
</g></svg></div>
<div class="a t" style="left:683px;top:526px;letter-spacing:0.12px">Oct 06, 18:51</div>
<div class="a t" style="left:799px;top:526px;letter-spacing:0.12px">Oct 06, 18:51</div>
<div class="a t" style="left:916px;top:526px;">4</div>
<div class="a t" style="left:1032px;top:526px;">30s</div>
<div class="a t" style="left:1149px;top:526px;">50</div>
<div class="a t" style="left:1265px;top:526px;">4</div>
<svg class="a" style="left:1380px;top:527px" width="8" height="18" viewBox="0 0 8 18"><circle cx="4" cy="5.5" r="1.3" fill="#5d6a7e"/><circle cx="4" cy="9.5" r="1.3" fill="#5d6a7e"/><circle cx="4" cy="13.5" r="1.3" fill="#5d6a7e"/></svg>
<div class="a" style="left:332px;top:595px;width:1072px;height:1px;background:#e8ebef"></div>
<div class="cb" style="left:347px;top:569px"></div>
<div class="a t lk" style="left:376px;top:566px;overflow:hidden;width:180px">Siren goes off without any reason</div>
<div class="a" style="left:572px;top:564px;width:24px;height:24px"><svg width="24" height="24" viewBox="0 0 36 36"><defs><clipPath id="c9"><circle cx="18" cy="18" r="18"/></clipPath></defs>
<g clip-path="url(#c9)"><rect width="36" height="36" fill="#d5c6b9"/>
<path d="M0 6h36M0 11h36M0 16h36M0 21h36M0 26h36" stroke="#b48f7a" stroke-width="1.3"/>
<path d="M5 6v5M13 6v5M29 6v5M9 11v5M31 11v5M4 16v5M30 16v5M7 21v5M31 21v5" stroke="#e3d8cf" stroke-width="1.4"/>
<ellipse cx="18.8" cy="10.5" rx="7.8" ry="7.8" fill="#8c7460"/>
<ellipse cx="18.8" cy="11.5" rx="5.8" ry="6.4" fill="#33241b"/>
<ellipse cx="18.8" cy="12.3" rx="3.6" ry="4.4" fill="#a97b5c"/>
<path d="M15.2 13.2 Q15.6 18.8 18.8 18.8 Q22 18.8 22.4 13.2 Q20.8 16.2 18.8 15.6 Q16.8 16.2 15.2 13.2Z" fill="#2a1d16"/>
<ellipse cx="18.5" cy="14.5" rx="1.6" ry="0.7" fill="#efe6de"/>
<path d="M1 37 L2.5 23 Q8 18.5 15.5 18 L19 19.5 L22 18.8 Q27.5 18.8 29.5 23.5 L31.5 37Z" fill="#e6ecee"/>
<path d="M22.5 13.8 Q24.8 17 24.3 24 L25.2 33" stroke="#a57656" stroke-width="2.2" fill="none" stroke-linecap="round"/>
<path d="M9 33.5 Q14 31 17.5 33 L17.5 37 L9 37Z" fill="#b8998a"/>
</g></svg></div>
<div class="a t" style="left:683px;top:566px;letter-spacing:0.12px">Oct 06, 18:51</div>
<div class="a t" style="left:799px;top:566px;letter-spacing:0.12px">Oct 06, 18:51</div>
<div class="a t" style="left:916px;top:566px;">4</div>
<div class="a t" style="left:1032px;top:566px;">30s</div>
<div class="a t" style="left:1149px;top:566px;">50</div>
<div class="a t" style="left:1265px;top:566px;">4</div>
<svg class="a" style="left:1380px;top:567px" width="8" height="18" viewBox="0 0 8 18"><circle cx="4" cy="5.5" r="1.3" fill="#5d6a7e"/><circle cx="4" cy="9.5" r="1.3" fill="#5d6a7e"/><circle cx="4" cy="13.5" r="1.3" fill="#5d6a7e"/></svg>
<div class="a" style="left:332px;top:635px;width:1072px;height:1px;background:#e8ebef"></div>
<div class="cb" style="left:347px;top:609px"></div>
<div class="a t lk" style="left:376px;top:606px;overflow:hidden;width:180px">Which categories can they</div>
<div class="a" style="left:572px;top:604px;width:24px;height:24px"><svg width="24" height="24" viewBox="0 0 36 36"><defs><clipPath id="c10"><circle cx="18" cy="18" r="18"/></clipPath></defs>
<g clip-path="url(#c10)"><rect width="36" height="36" fill="#d5c6b9"/>
<path d="M0 6h36M0 11h36M0 16h36M0 21h36M0 26h36" stroke="#b48f7a" stroke-width="1.3"/>
<path d="M5 6v5M13 6v5M29 6v5M9 11v5M31 11v5M4 16v5M30 16v5M7 21v5M31 21v5" stroke="#e3d8cf" stroke-width="1.4"/>
<ellipse cx="18.8" cy="10.5" rx="7.8" ry="7.8" fill="#8c7460"/>
<ellipse cx="18.8" cy="11.5" rx="5.8" ry="6.4" fill="#33241b"/>
<ellipse cx="18.8" cy="12.3" rx="3.6" ry="4.4" fill="#a97b5c"/>
<path d="M15.2 13.2 Q15.6 18.8 18.8 18.8 Q22 18.8 22.4 13.2 Q20.8 16.2 18.8 15.6 Q16.8 16.2 15.2 13.2Z" fill="#2a1d16"/>
<ellipse cx="18.5" cy="14.5" rx="1.6" ry="0.7" fill="#efe6de"/>
<path d="M1 37 L2.5 23 Q8 18.5 15.5 18 L19 19.5 L22 18.8 Q27.5 18.8 29.5 23.5 L31.5 37Z" fill="#e6ecee"/>
<path d="M22.5 13.8 Q24.8 17 24.3 24 L25.2 33" stroke="#a57656" stroke-width="2.2" fill="none" stroke-linecap="round"/>
<path d="M9 33.5 Q14 31 17.5 33 L17.5 37 L9 37Z" fill="#b8998a"/>
</g></svg></div>
<div class="a t" style="left:683px;top:606px;letter-spacing:0.12px">Oct 06, 18:51</div>
<div class="a t" style="left:799px;top:606px;letter-spacing:0.12px">Oct 06, 18:51</div>
<div class="a t" style="left:916px;top:606px;">4</div>
<div class="a t" style="left:1032px;top:606px;">30s</div>
<div class="a t" style="left:1149px;top:606px;">50</div>
<div class="a t" style="left:1265px;top:606px;">4</div>
<svg class="a" style="left:1380px;top:607px" width="8" height="18" viewBox="0 0 8 18"><circle cx="4" cy="5.5" r="1.3" fill="#5d6a7e"/><circle cx="4" cy="9.5" r="1.3" fill="#5d6a7e"/><circle cx="4" cy="13.5" r="1.3" fill="#5d6a7e"/></svg>
<div class="a" style="left:332px;top:675px;width:1072px;height:1px;background:#e8ebef"></div>
<div class="cb" style="left:347px;top:649px"></div>
<div class="a t lk" style="left:376px;top:646px;overflow:hidden;width:180px">Night vision sometimes flashes</div>
<div class="a" style="left:572px;top:644px;width:24px;height:24px"><svg width="24" height="24" viewBox="0 0 36 36"><defs><clipPath id="c11"><circle cx="18" cy="18" r="18"/></clipPath></defs>
<g clip-path="url(#c11)"><rect width="36" height="36" fill="#d5c6b9"/>
<path d="M0 6h36M0 11h36M0 16h36M0 21h36M0 26h36" stroke="#b48f7a" stroke-width="1.3"/>
<path d="M5 6v5M13 6v5M29 6v5M9 11v5M31 11v5M4 16v5M30 16v5M7 21v5M31 21v5" stroke="#e3d8cf" stroke-width="1.4"/>
<ellipse cx="18.8" cy="10.5" rx="7.8" ry="7.8" fill="#8c7460"/>
<ellipse cx="18.8" cy="11.5" rx="5.8" ry="6.4" fill="#33241b"/>
<ellipse cx="18.8" cy="12.3" rx="3.6" ry="4.4" fill="#a97b5c"/>
<path d="M15.2 13.2 Q15.6 18.8 18.8 18.8 Q22 18.8 22.4 13.2 Q20.8 16.2 18.8 15.6 Q16.8 16.2 15.2 13.2Z" fill="#2a1d16"/>
<ellipse cx="18.5" cy="14.5" rx="1.6" ry="0.7" fill="#efe6de"/>
<path d="M1 37 L2.5 23 Q8 18.5 15.5 18 L19 19.5 L22 18.8 Q27.5 18.8 29.5 23.5 L31.5 37Z" fill="#e6ecee"/>
<path d="M22.5 13.8 Q24.8 17 24.3 24 L25.2 33" stroke="#a57656" stroke-width="2.2" fill="none" stroke-linecap="round"/>
<path d="M9 33.5 Q14 31 17.5 33 L17.5 37 L9 37Z" fill="#b8998a"/>
</g></svg></div>
<div class="a t" style="left:683px;top:646px;letter-spacing:0.12px">Oct 06, 18:51</div>
<div class="a t" style="left:799px;top:646px;letter-spacing:0.12px">Oct 06, 18:51</div>
<div class="a t" style="left:916px;top:646px;">4</div>
<div class="a t" style="left:1032px;top:646px;">30s</div>
<div class="a t" style="left:1149px;top:646px;">50</div>
<div class="a t" style="left:1265px;top:646px;">4</div>
<svg class="a" style="left:1380px;top:647px" width="8" height="18" viewBox="0 0 8 18"><circle cx="4" cy="5.5" r="1.3" fill="#5d6a7e"/><circle cx="4" cy="9.5" r="1.3" fill="#5d6a7e"/><circle cx="4" cy="13.5" r="1.3" fill="#5d6a7e"/></svg>
<div class="a" style="left:332px;top:715px;width:1072px;height:1px;background:#e8ebef"></div>
<div class="cb" style="left:347px;top:689px"></div>
<div class="a t lk" style="left:376px;top:686px;overflow:hidden;width:180px">Slight delay in receiving alerts</div>
<div class="a" style="left:572px;top:684px;width:24px;height:24px"><svg width="24" height="24" viewBox="0 0 36 36"><defs><clipPath id="c12"><circle cx="18" cy="18" r="18"/></clipPath></defs>
<g clip-path="url(#c12)"><rect width="36" height="36" fill="#d5c6b9"/>
<path d="M0 6h36M0 11h36M0 16h36M0 21h36M0 26h36" stroke="#b48f7a" stroke-width="1.3"/>
<path d="M5 6v5M13 6v5M29 6v5M9 11v5M31 11v5M4 16v5M30 16v5M7 21v5M31 21v5" stroke="#e3d8cf" stroke-width="1.4"/>
<ellipse cx="18.8" cy="10.5" rx="7.8" ry="7.8" fill="#8c7460"/>
<ellipse cx="18.8" cy="11.5" rx="5.8" ry="6.4" fill="#33241b"/>
<ellipse cx="18.8" cy="12.3" rx="3.6" ry="4.4" fill="#a97b5c"/>
<path d="M15.2 13.2 Q15.6 18.8 18.8 18.8 Q22 18.8 22.4 13.2 Q20.8 16.2 18.8 15.6 Q16.8 16.2 15.2 13.2Z" fill="#2a1d16"/>
<ellipse cx="18.5" cy="14.5" rx="1.6" ry="0.7" fill="#efe6de"/>
<path d="M1 37 L2.5 23 Q8 18.5 15.5 18 L19 19.5 L22 18.8 Q27.5 18.8 29.5 23.5 L31.5 37Z" fill="#e6ecee"/>
<path d="M22.5 13.8 Q24.8 17 24.3 24 L25.2 33" stroke="#a57656" stroke-width="2.2" fill="none" stroke-linecap="round"/>
<path d="M9 33.5 Q14 31 17.5 33 L17.5 37 L9 37Z" fill="#b8998a"/>
</g></svg></div>
<div class="a t" style="left:683px;top:686px;letter-spacing:0.12px">Oct 06, 18:51</div>
<div class="a t" style="left:799px;top:686px;letter-spacing:0.12px">Oct 06, 18:51</div>
<div class="a t" style="left:916px;top:686px;">4</div>
<div class="a t" style="left:1032px;top:686px;">30s</div>
<div class="a t" style="left:1149px;top:686px;">50</div>
<div class="a t" style="left:1265px;top:686px;">4</div>
<svg class="a" style="left:1380px;top:687px" width="8" height="18" viewBox="0 0 8 18"><circle cx="4" cy="5.5" r="1.3" fill="#5d6a7e"/><circle cx="4" cy="9.5" r="1.3" fill="#5d6a7e"/><circle cx="4" cy="13.5" r="1.3" fill="#5d6a7e"/></svg>
<div class="a" style="left:332px;top:755px;width:1072px;height:1px;background:#e8ebef"></div>
<div class="cb" style="left:347px;top:729px"></div>
<div class="a t lk" style="left:376px;top:726px;overflow:hidden;width:180px">Button for sharing live stream</div>
<div class="a" style="left:572px;top:724px;width:24px;height:24px"><svg width="24" height="24" viewBox="0 0 36 36"><defs><clipPath id="c13"><circle cx="18" cy="18" r="18"/></clipPath></defs>
<g clip-path="url(#c13)"><rect width="36" height="36" fill="#d5c6b9"/>
<path d="M0 6h36M0 11h36M0 16h36M0 21h36M0 26h36" stroke="#b48f7a" stroke-width="1.3"/>
<path d="M5 6v5M13 6v5M29 6v5M9 11v5M31 11v5M4 16v5M30 16v5M7 21v5M31 21v5" stroke="#e3d8cf" stroke-width="1.4"/>
<ellipse cx="18.8" cy="10.5" rx="7.8" ry="7.8" fill="#8c7460"/>
<ellipse cx="18.8" cy="11.5" rx="5.8" ry="6.4" fill="#33241b"/>
<ellipse cx="18.8" cy="12.3" rx="3.6" ry="4.4" fill="#a97b5c"/>
<path d="M15.2 13.2 Q15.6 18.8 18.8 18.8 Q22 18.8 22.4 13.2 Q20.8 16.2 18.8 15.6 Q16.8 16.2 15.2 13.2Z" fill="#2a1d16"/>
<ellipse cx="18.5" cy="14.5" rx="1.6" ry="0.7" fill="#efe6de"/>
<path d="M1 37 L2.5 23 Q8 18.5 15.5 18 L19 19.5 L22 18.8 Q27.5 18.8 29.5 23.5 L31.5 37Z" fill="#e6ecee"/>
<path d="M22.5 13.8 Q24.8 17 24.3 24 L25.2 33" stroke="#a57656" stroke-width="2.2" fill="none" stroke-linecap="round"/>
<path d="M9 33.5 Q14 31 17.5 33 L17.5 37 L9 37Z" fill="#b8998a"/>
</g></svg></div>
<div class="a t" style="left:683px;top:726px;letter-spacing:0.12px">Oct 06, 18:51</div>
<div class="a t" style="left:799px;top:726px;letter-spacing:0.12px">Oct 06, 18:51</div>
<div class="a t" style="left:916px;top:726px;">4</div>
<div class="a t" style="left:1032px;top:726px;">30s</div>
<div class="a t" style="left:1149px;top:726px;">50</div>
<div class="a t" style="left:1265px;top:726px;">4</div>
<svg class="a" style="left:1380px;top:727px" width="8" height="18" viewBox="0 0 8 18"><circle cx="4" cy="5.5" r="1.3" fill="#5d6a7e"/><circle cx="4" cy="9.5" r="1.3" fill="#5d6a7e"/><circle cx="4" cy="13.5" r="1.3" fill="#5d6a7e"/></svg>
<div class="a" style="left:332px;top:795px;width:1072px;height:1px;background:#e8ebef"></div>
<div class="cb" style="left:347px;top:769px"></div>
<div class="a" style="left:369px;top:766px;width:56px;height:20px;background:#f2f6fd"></div>
<div class="a" style="left:376px;top:769px;width:46px;height:14px;background:repeating-linear-gradient(90deg,#d3e0f8 0 3px,#dfe8fa 3px 5px);filter:blur(1.8px)"></div>
<div class="a t lk" style="left:425px;top:766px;overflow:hidden;width:131px">is having issues pairing</div>
<div class="a" style="left:572px;top:764px;width:24px;height:24px"><svg width="24" height="24" viewBox="0 0 36 36"><defs><clipPath id="c14"><circle cx="18" cy="18" r="18"/></clipPath></defs>
<g clip-path="url(#c14)"><rect width="36" height="36" fill="#d5c6b9"/>
<path d="M0 6h36M0 11h36M0 16h36M0 21h36M0 26h36" stroke="#b48f7a" stroke-width="1.3"/>
<path d="M5 6v5M13 6v5M29 6v5M9 11v5M31 11v5M4 16v5M30 16v5M7 21v5M31 21v5" stroke="#e3d8cf" stroke-width="1.4"/>
<ellipse cx="18.8" cy="10.5" rx="7.8" ry="7.8" fill="#8c7460"/>
<ellipse cx="18.8" cy="11.5" rx="5.8" ry="6.4" fill="#33241b"/>
<ellipse cx="18.8" cy="12.3" rx="3.6" ry="4.4" fill="#a97b5c"/>
<path d="M15.2 13.2 Q15.6 18.8 18.8 18.8 Q22 18.8 22.4 13.2 Q20.8 16.2 18.8 15.6 Q16.8 16.2 15.2 13.2Z" fill="#2a1d16"/>
<ellipse cx="18.5" cy="14.5" rx="1.6" ry="0.7" fill="#efe6de"/>
<path d="M1 37 L2.5 23 Q8 18.5 15.5 18 L19 19.5 L22 18.8 Q27.5 18.8 29.5 23.5 L31.5 37Z" fill="#e6ecee"/>
<path d="M22.5 13.8 Q24.8 17 24.3 24 L25.2 33" stroke="#a57656" stroke-width="2.2" fill="none" stroke-linecap="round"/>
<path d="M9 33.5 Q14 31 17.5 33 L17.5 37 L9 37Z" fill="#b8998a"/>
</g></svg></div>
<div class="a t" style="left:683px;top:766px;letter-spacing:0.12px">Oct 06, 18:51</div>
<div class="a t" style="left:799px;top:766px;letter-spacing:0.12px">Oct 06, 18:51</div>
<div class="a t" style="left:916px;top:766px;">4</div>
<div class="a t" style="left:1032px;top:766px;">30s</div>
<div class="a t" style="left:1149px;top:766px;">50</div>
<div class="a t" style="left:1265px;top:766px;">4</div>
<svg class="a" style="left:1380px;top:767px" width="8" height="18" viewBox="0 0 8 18"><circle cx="4" cy="5.5" r="1.3" fill="#5d6a7e"/><circle cx="4" cy="9.5" r="1.3" fill="#5d6a7e"/><circle cx="4" cy="13.5" r="1.3" fill="#5d6a7e"/></svg>
<div class="a" style="left:332px;top:835px;width:1072px;height:1px;background:#e8ebef"></div>
<div class="cb" style="left:347px;top:809px"></div>
<div class="a t lk" style="left:376px;top:806px;overflow:hidden;width:180px">More</div>
<div class="a" style="left:572px;top:804px;width:24px;height:24px"><svg width="24" height="24" viewBox="0 0 36 36"><defs><clipPath id="c15"><circle cx="18" cy="18" r="18"/></clipPath></defs>
<g clip-path="url(#c15)"><rect width="36" height="36" fill="#d5c6b9"/>
<path d="M0 6h36M0 11h36M0 16h36M0 21h36M0 26h36" stroke="#b48f7a" stroke-width="1.3"/>
<path d="M5 6v5M13 6v5M29 6v5M9 11v5M31 11v5M4 16v5M30 16v5M7 21v5M31 21v5" stroke="#e3d8cf" stroke-width="1.4"/>
<ellipse cx="18.8" cy="10.5" rx="7.8" ry="7.8" fill="#8c7460"/>
<ellipse cx="18.8" cy="11.5" rx="5.8" ry="6.4" fill="#33241b"/>
<ellipse cx="18.8" cy="12.3" rx="3.6" ry="4.4" fill="#a97b5c"/>
<path d="M15.2 13.2 Q15.6 18.8 18.8 18.8 Q22 18.8 22.4 13.2 Q20.8 16.2 18.8 15.6 Q16.8 16.2 15.2 13.2Z" fill="#2a1d16"/>
<ellipse cx="18.5" cy="14.5" rx="1.6" ry="0.7" fill="#efe6de"/>
<path d="M1 37 L2.5 23 Q8 18.5 15.5 18 L19 19.5 L22 18.8 Q27.5 18.8 29.5 23.5 L31.5 37Z" fill="#e6ecee"/>
<path d="M22.5 13.8 Q24.8 17 24.3 24 L25.2 33" stroke="#a57656" stroke-width="2.2" fill="none" stroke-linecap="round"/>
<path d="M9 33.5 Q14 31 17.5 33 L17.5 37 L9 37Z" fill="#b8998a"/>
</g></svg></div>
<div class="a t" style="left:683px;top:806px;letter-spacing:0.12px">Oct 06, 18:51</div>
<div class="a t" style="left:799px;top:806px;letter-spacing:0.12px">Oct 06, 18:51</div>
<div class="a t" style="left:916px;top:806px;">4</div>
<div class="a t" style="left:1032px;top:806px;">30s</div>
<div class="a t" style="left:1149px;top:806px;">50</div>
<div class="a t" style="left:1265px;top:806px;">4</div>
<svg class="a" style="left:1380px;top:807px" width="8" height="18" viewBox="0 0 8 18"><circle cx="4" cy="5.5" r="1.3" fill="#5d6a7e"/><circle cx="4" cy="9.5" r="1.3" fill="#5d6a7e"/><circle cx="4" cy="13.5" r="1.3" fill="#5d6a7e"/></svg>
</body></html>
